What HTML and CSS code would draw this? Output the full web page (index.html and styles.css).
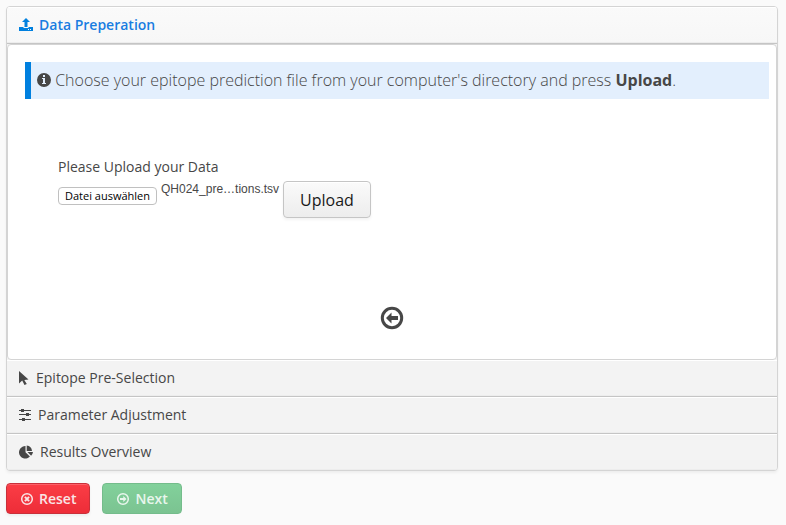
FILE: index.html
```html
<!DOCTYPE html>
<html lang="en">
<head>
<meta charset="utf-8">
<title>Data Preperation</title>
<link rel="stylesheet" href="styles.css">
</head>
<body>
<main>
  <div class="accordion">
    <button class="head open" type="button" aria-expanded="true">
      <svg width="14" height="14" viewBox="0 0 14 14"><path d="M7 0l4 4H8.500v5h-3V4H3z"/><path fill-rule="evenodd" d="M0 9h4.500v1h5V9H14v4H0zM9 11v1h1v-1zM11 11v1h1v-1z"/></svg>
      <span>Data Preperation</span>
    </button>
    <section class="content">
      <p class="notice">
        <svg width="14" height="14" viewBox="0 0 14 14"><path fill-rule="evenodd" d="M7 0a7 7 0 1 1 0 14A7 7 0 0 1 7 0zM6 2v2h2V2zM5 5v1h1v4H5v1h4v-1H8V5z"/></svg>
        Choose your epitope prediction file from your computer's directory and press <b>Upload</b>.
      </p>
      <form class="upload">
        <div class="caption">Please Upload your Data</div>
        <div class="picker">
          <input type="file" id="file">
          <label class="choose" for="file">Datei auswählen</label>
          <span class="filename">QH024_pre…tions.tsv</span>
          <button class="submit" type="button">Upload</button>
        </div>
      </form>
      <div class="steps">
        <button class="back" type="button" aria-label="Back">
          <svg width="24" height="24" viewBox="0 0 24 24"><circle cx="12" cy="12" r="9.700" fill="none" stroke="currentColor" stroke-width="3"/><path d="M6 12l5.500-5.500V10H18v4h-6.500v3.500z"/></svg>
        </button>
      </div>
    </section>
    <button class="head" type="button" aria-expanded="false">
      <svg width="11" height="14" viewBox="0 0 11 14"><path d="M0 0l9.500 8.500-4.200.4 2.500 4.200-2.300.9-2.300-4.500L0 12.500z"/></svg>
      <span>Epitope Pre-Selection</span>
    </button>
    <button class="head" type="button" aria-expanded="false">
      <svg width="13" height="14" viewBox="0 0 13 14"><path d="M0 2h12v1H0zM0 6h12v1H0zM0 11h12v1H0z"/><path d="M2 1h3v3H2zM7 5h3v3H7zM3 10h3v3H3z"/></svg>
      <span>Parameter Adjustment</span>
    </button>
    <button class="head" type="button" aria-expanded="false">
      <svg width="15" height="14" viewBox="0 0 15 14"><path d="M6.500 1v6.200l4.400 4.400A6.300 6.300 0 1 1 6.500 1zM7.700 0.500A6 6 0 0 1 13 6H7.700zM8.500 7H14a6 6 0 0 1-1.900 3.700z"/></svg>
      <span>Results Overview</span>
    </button>
  </div>
  <div class="actions">
    <button class="btn reset" type="button">
      <svg width="14" height="14" viewBox="0 0 14 14"><circle cx="7" cy="7" r="5.300" fill="none" stroke="currentColor" stroke-width="1.500"/><path d="M4.900 4.900l4.200 4.200M9.100 4.900L4.900 9.100" fill="none" stroke="currentColor" stroke-width="2"/></svg>
      <span>Reset</span>
    </button>
    <button class="btn next" type="button" disabled>
      <svg width="14" height="14" viewBox="0 0 14 14"><circle cx="7" cy="7" r="5.300" fill="none" stroke="currentColor" stroke-width="1.500"/><path d="M10.500 7L7.300 3.900V6H4v2h3.300v2.100z"/></svg>
      <span>Next</span>
    </button>
  </div>
</main>
</body>
</html>
```
FILE: styles.css
```css
* { box-sizing: border-box; }
body {
  margin: 0;
  background: #fafafa;
  color: #474747;
  font: 14px/20px "Open Sans", sans-serif;
}
main { padding: 6px 8px 6px 6px; }
button { font: inherit; color: inherit; margin: 0; }
svg { fill: currentColor; flex: none; display: block; }

.accordion {
  border: 1px solid #d4d4d4;
  border-radius: 4px;
  box-shadow: 0 2px 3px rgba(0, 0, 0, 0.05);
  overflow: hidden;
  background: #f3f3f3;
}
.head {
  display: flex;
  align-items: center;
  gap: 6px;
  width: 100%;
  height: 37px;
  padding: 0 12px;
  border: 0;
  border-bottom: 1px solid #c5c5c5;
  background: #f3f3f3;
  box-shadow: inset 0 1px #fff, inset 0 -1px #ededed;
  text-align: left;
}
.head:last-child { height: 36px; border-bottom: 0; }
.head.open {
  background: linear-gradient(#fafafa, #f7f7f7);
  color: #197de1;
  font-weight: 600;
}
.head.open svg { color: #0080df; }

.content {
  border: 1px solid #d4d4d4;
  border-radius: 4px;
  background: #fff;
  padding: 17px 7px 29px 17px;
}
.notice {
  margin: 0;
  padding: 6px;
  border-left: 6px solid #0080df;
  background: #e3effd;
  font-size: 16px;
  line-height: 25px;
  font-weight: 300;
}
.notice svg { display: inline-block; vertical-align: -1px; }
.notice b { font-weight: 700; }

.upload { padding: 58px 33px 0; }
.picker { display: flex; align-items: flex-start; gap: 4px; padding-top: 4px; }
.picker input {
  position: absolute;
  opacity: 0;
  width: 1px;
  height: 1px;
}
.choose {
  margin-top: 6px;
  padding: 0 6px;
  border: 1px solid #c0c0c0;
  border-radius: 4px;
  background: #fff;
  color: #000;
  font-size: 11px;
  line-height: 16px;
}
.filename {
  font: 12px/16px "Liberation Sans", sans-serif;
}
.submit {
  height: 37px;
  padding: 0 16px;
  border: 1px solid #c5c5c5;
  border-radius: 4px;
  background: linear-gradient(#fafafa, #ededed);
  box-shadow: inset 0 1px #fff, 0 2px 3px rgba(0, 0, 0, 0.05);
  color: #191919;
  font-size: 16px;
}
.steps {
  display: flex;
  justify-content: center;
  padding: 88px 10px 0 0;
}
.back {
  padding: 0;
  border: 0;
  background: none;
}

.actions { display: flex; gap: 12px; padding-top: 12px; }
.btn {
  display: flex;
  align-items: center;
  gap: 5px;
  height: 31px;
  padding: 0 13px;
  border: 1px solid;
  border-radius: 4px;
  font-weight: 600;
}
.reset {
  border-color: #c9303a;
  background: linear-gradient(#fb3d46, #ed2d38);
  box-shadow: inset 0 1px #fd6068, 0 2px 3px rgba(0, 0, 0, 0.05);
  color: #f9e5e6;
}
.next {
  border-color: #74bc8b;
  background: linear-gradient(#82d19b, #7bc391);
  color: #e9f6ed;
}
```
